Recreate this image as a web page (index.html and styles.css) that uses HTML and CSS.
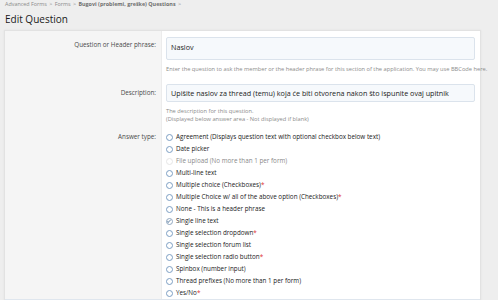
FILE: index.html
```html
<!DOCTYPE html>
<html>

<head>
    <meta charset="utf-8">
    <link rel="stylesheet" href="styles.css">
</head>

<body>
    <div class="crumbs">
        <a>Advanced Forms</a> <span class="sep">&gt;</span>
        <a>Forms</a> <span class="sep">&gt;</span>
        <a class="cur">Bugovi (problemi, greške) Questions</a> <span class="sep">&gt;</span>
    </div>

    <h1>Edit Question</h1>

    <form class="panel">
        <div class="row">
            <label class="term">Question or Header phrase:</label>
            <div class="field">
                <div class="input tall">Naslov</div>
                <div class="hint">Enter the question to ask the member or the header phrase for this section of the application. You may use BBCode here.</div>
            </div>
        </div>

        <div class="row">
            <label class="term">Description:</label>
            <div class="field">
                <div class="input">Upišite naslov za thread (temu) koja će biti otvorena nakon što ispunite ovaj upitnik</div>
                <div class="hint">The description for this question.<br>(Displayed below answer area - Not displayed if blank)</div>
            </div>
        </div>

        <div class="row">
            <label class="term">Answer type:</label>
            <ul class="choices">
                <li><i class="radio"></i>Agreement (Displays question text with optional checkbox below text)</li>
                <li><i class="radio"></i>Date picker</li>
                <li class="off"><i class="radio"></i>File upload (No more than 1 per form)</li>
                <li><i class="radio"></i>Multi-line text</li>
                <li><i class="radio"></i>Multiple choice (Checkboxes)<b>*</b></li>
                <li><i class="radio"></i>Multiple Choice w/ all of the above option (Checkboxes)<b>*</b></li>
                <li><i class="radio"></i>None - This is a header phrase</li>
                <li class="on"><i class="radio"></i>Single line text</li>
                <li><i class="radio"></i>Single selection dropdown<b>*</b></li>
                <li><i class="radio"></i>Single selection forum list</li>
                <li><i class="radio"></i>Single selection radio button<b>*</b></li>
                <li><i class="radio"></i>Spinbox (number input)</li>
                <li><i class="radio"></i>Thread prefixes (No more than 1 per form)</li>
                <li><i class="radio"></i>Yes/No<b>*</b></li>
            </ul>
        </div>
        <div class="foot"></div>
    </form>
</body>

</html>
```

FILE: styles.css
```css
body {
    background: #eee;
    font-family: 'Open Sans', 'Noto Sans', sans-serif;
    color: #141414;
    margin: 0;
    padding: 0 17px 0 4px;
    overflow: hidden;
}

.crumbs {
    font-size: 5.4px;
    color: #8a8a8a;
    line-height: 9px;
    height: 9px;
    padding: 0 0 0 1px;
}

.crumbs .cur {
    font-weight: bold;
    color: #6f6f6f;
}

.crumbs .sep {
    margin: 0 1px;
}

h1 {
    font-size: 10px;
    font-weight: 400;
    line-height: 16px;
    margin: 2px 0 3px 1px;
    color: #1a1a1a;
}

.panel {
    background: #fff;
    border: 1px solid #e2e2e2;
    border-bottom: none;
    box-shadow: 0 0 2px rgba(0, 0, 0, .06);
}

.row {
    display: grid;
    grid-template-columns: 157px 1fr;
}

.term {
    background: #f5f5f5;
    text-align: right;
    font-size: 6.3px;
    line-height: 12px;
    color: #4a4a4a;
    padding: 8px 5px 0 0;
    border-right: 1px solid #ececec;
}

.field {
    padding: 6px 5px 5px 4px;
    min-width: 0;
}

.row + .row .field {
    padding-top: 6px;
}

.input {
    background: #f6f9fc;
    border: 1px solid #dbe3ec;
    border-radius: 2px;
    font-size: 7.2px;
    line-height: 16px;
    padding: 0 4px;
    color: #1b1b1b;
    white-space: nowrap;
}

.input.tall {
    height: 19px;
    padding-top: 2px;
    line-height: 15px;
}

.hint {
    font-size: 5.7px;
    line-height: 8px;
    color: #8c8c8c;
    margin-top: 5px;
    white-space: nowrap;
}

.row:nth-child(2) .term {
    padding-top: 9px;
}

.row:nth-child(3) .term {
    padding-top: 3px;
}

.choices {
    list-style: none;
    margin: 0;
    padding: 3px 0 0 4px;
}

.choices li {
    font-size: 6.3px;
    line-height: 12px;
    height: 12px;
    color: #1b1b1b;
    display: flex;
    align-items: center;
    white-space: nowrap;
}

.choices b {
    color: #e03030;
    font-weight: normal;
}

.radio {
    width: 5px;
    height: 5px;
    border: 1px solid #7d9fc4;
    border-radius: 50%;
    margin-right: 3px;
    flex: none;
    background: #fff;
}

.choices .off {
    color: #8a8a8a;
}

.choices .off .radio {
    border-color: #e6e6e6;
}

.choices .on .radio {
    border-color: #8fa6bf;
    position: relative;
}

.choices .on .radio::after {
    content: '';
    position: absolute;
    left: 1.3px;
    top: 0.2px;
    width: 1.3px;
    height: 2.6px;
    border: solid #8fa6bf;
    border-width: 0 1px 1px 0;
    transform: rotate(45deg);
}

.foot {
    height: 4px;
    background: #e8eef4;
    border-top: 1px solid #dfe6ee;
}
```
